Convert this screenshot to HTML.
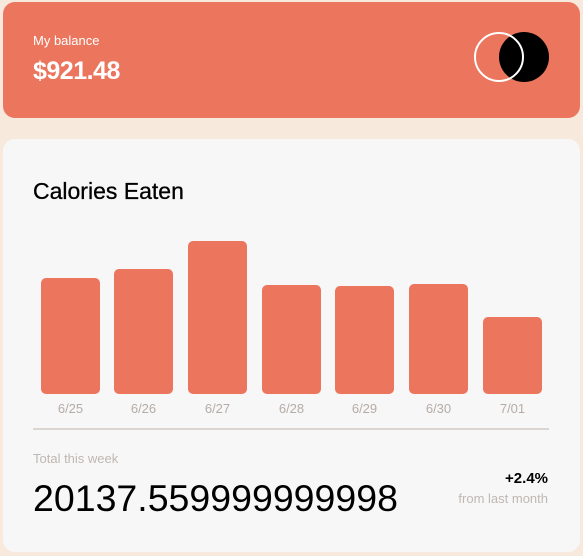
<!DOCTYPE html>
<html><head><style>
body{margin:0;width:583px;height:556px;background:#f8e9dd;font-family:"Liberation Sans",sans-serif;position:relative;overflow:hidden}
.top{position:absolute;left:3px;top:2px;width:577px;height:116px;background:#ec755d;border-radius:12px}
.card{position:absolute;left:3px;top:139px;width:577px;height:413px;background:#f7f7f7;border-radius:12px}
.a{position:absolute;white-space:nowrap}
.bar{position:absolute;background:#ec755d;border-radius:5px;width:59px}
.lab{position:absolute;top:401px;width:59px;text-align:center;color:#b5aca7;font-size:13px}
</style></head><body>
<div class="top"></div>
<div class="a" style="left:33px;top:33px;color:#fff;font-size:13px">My balance</div>
<div class="a" style="left:33px;top:57px;color:#fff;font-size:25px;font-weight:bold;letter-spacing:-0.5px">$921.48</div>
<div class="a" style="left:499px;top:32px;width:50px;height:50px;border-radius:50%;background:#000"></div>
<div class="a" style="left:474px;top:32px;width:46px;height:46px;border-radius:50%;border:2px solid #fff"></div>
<div class="card"></div>
<div class="a" style="left:33px;top:178px;font-size:23px;color:#000;-webkit-text-stroke:0.3px #000">Calories Eaten</div>
<div class="bar" style="left:41px;top:278px;height:116px"></div>
<div class="bar" style="left:114px;top:269px;height:125px"></div>
<div class="bar" style="left:188px;top:241px;height:153px"></div>
<div class="bar" style="left:262px;top:285px;height:109px"></div>
<div class="bar" style="left:335px;top:286px;height:108px"></div>
<div class="bar" style="left:409px;top:284px;height:110px"></div>
<div class="bar" style="left:483px;top:317px;height:77px"></div>
<div class="lab" style="left:41px">6/25</div>
<div class="lab" style="left:114px">6/26</div>
<div class="lab" style="left:188px">6/27</div>
<div class="lab" style="left:262px">6/28</div>
<div class="lab" style="left:335px">6/29</div>
<div class="lab" style="left:409px">6/30</div>
<div class="lab" style="left:483px">7/01</div>
<div class="a" style="left:33px;top:428px;width:516px;height:2px;background:#dcd6d2"></div>
<div class="a" style="left:33px;top:451px;font-size:13px;color:#bfb7b2">Total this week</div>
<div class="a" style="left:33px;top:477px;font-size:37.5px;color:#000">20137.559999999998</div>
<div class="a" style="right:35px;top:470px;font-size:15px;font-weight:bold;color:#000">+2.4%</div>
<div class="a" style="right:35px;top:491px;font-size:13px;color:#bfb7b2">from last month</div>
</body></html>
